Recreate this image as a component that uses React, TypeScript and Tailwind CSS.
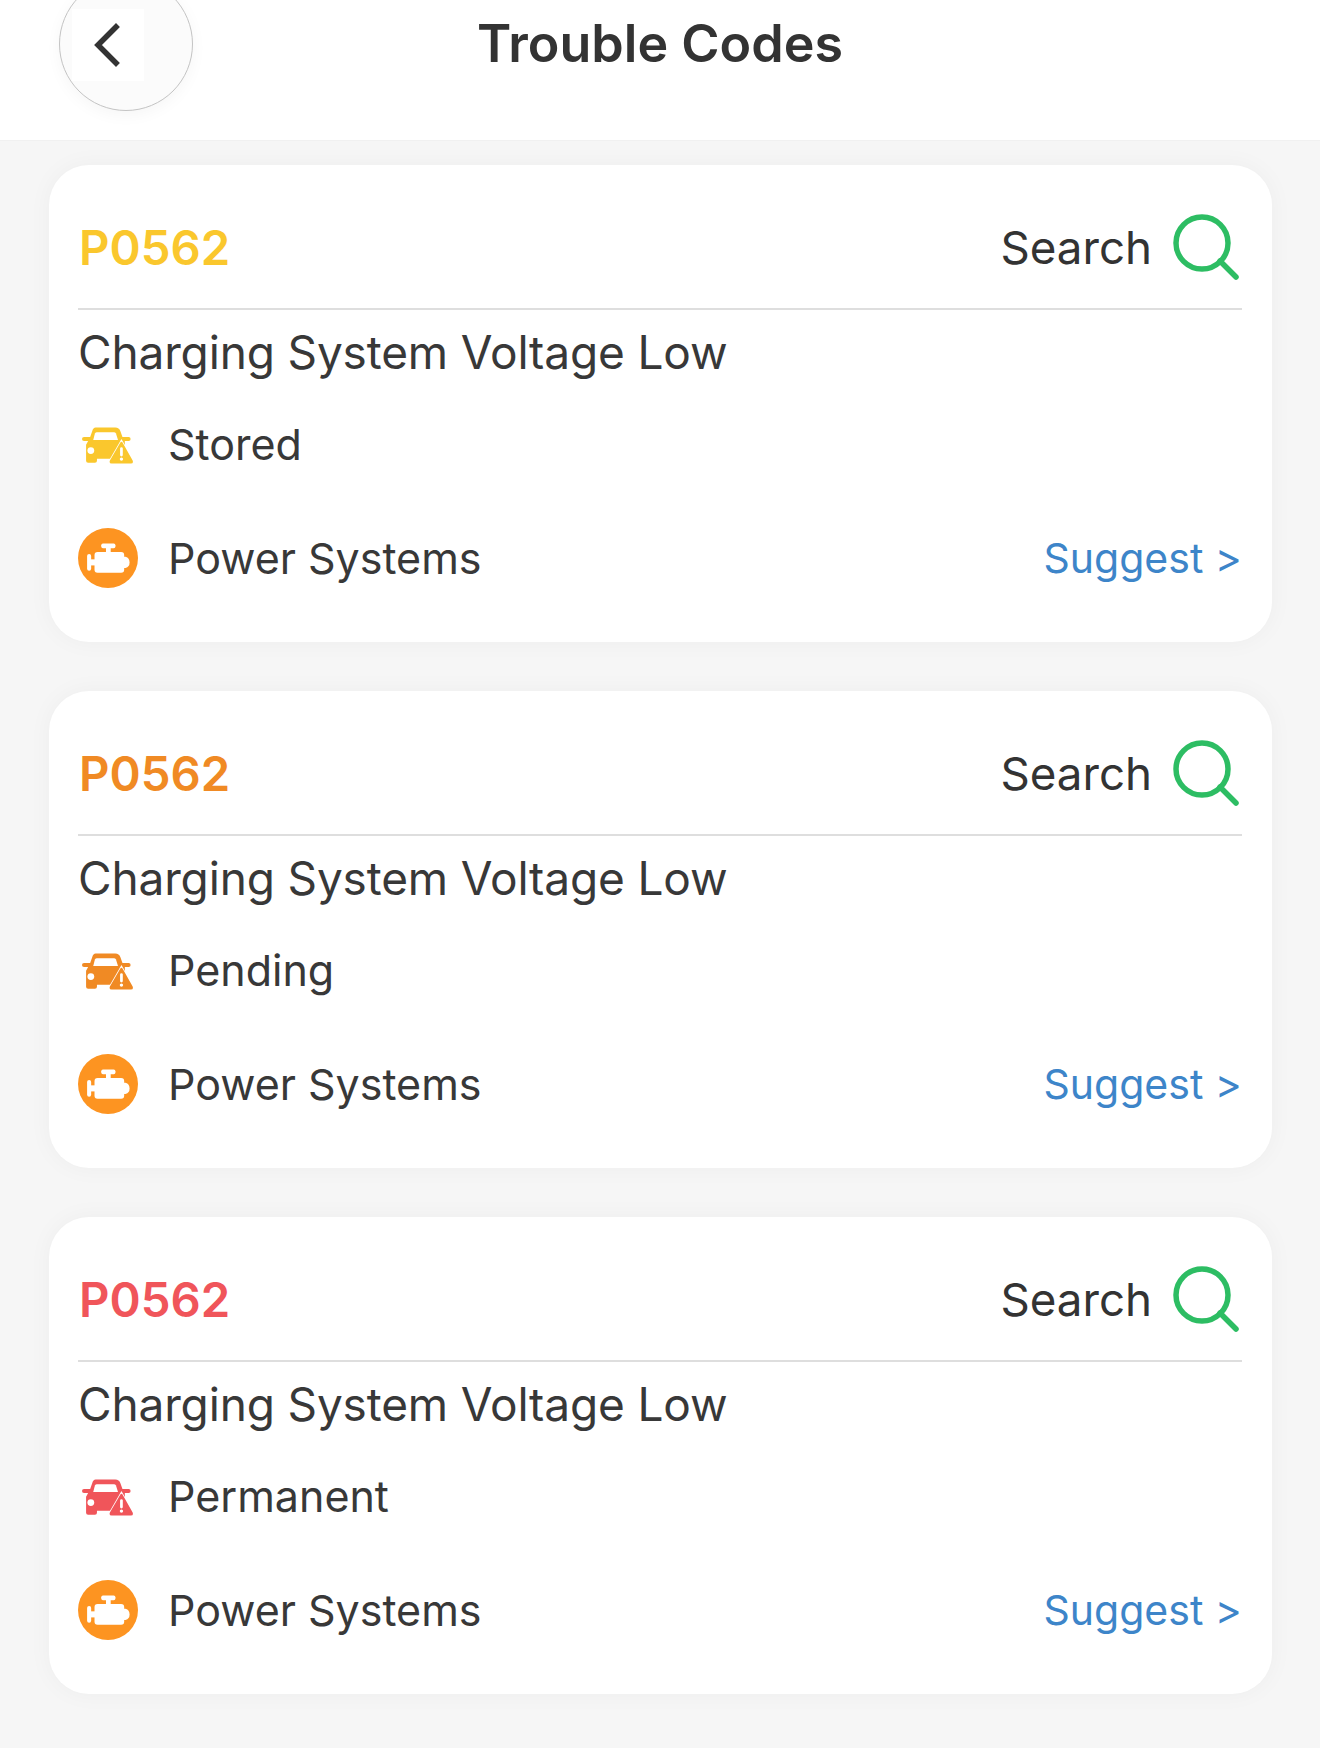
const FONT = "font-['Inter','Liberation_Sans',sans-serif]";

function CarIcon({ color }: { color: string }) {
  return (
    <svg width="51" height="37" viewBox="68 83 150 108" className="mt-[2px]">
      <path
        d="M108 84 H166 Q177 84 181 95 L187 112 H205 Q211 112 211 118 Q211 124 205 124 H194 V176 H112 V182 Q112 188 106 188 H86 Q80 188 80 182 V135 L86 124 H74 Q68 124 68 118 Q68 112 74 112 H92 L98 95 Q101 84 108 84 Z"
        fill={color}
      />
      <path d="M112 98 H162 Q166 98 168 102 L174 121 H101 L106 102 Q108 98 112 98 Z" fill="#ffffff" />
      <circle cx="94" cy="152" r="10" fill="#ffffff" />
      <path d="M184 118 L140 194 H228 Z" fill="#ffffff" />
      <path d="M184 126 Q186 126 188 130 L217 181 Q220 190 212 190 H155 Q147 190 150 181 L180 130 Q182 126 184 126 Z" fill={color} />
      <rect x="180" y="142" width="8" height="27" rx="4" fill="#ffffff" />
      <circle cx="184" cy="177" r="5" fill="#ffffff" />
    </svg>
  );
}

function EngineIcon() {
  return (
    <svg width="60" height="60" viewBox="55 385 178 178">
      <circle cx="144" cy="474" r="89" fill="#fd9421" />
      <g fill="#ffffff">
        <rect x="124" y="431" width="42" height="14" rx="5" />
        <rect x="138" y="444" width="14" height="14" />
        <rect x="104" y="456" width="88" height="62" rx="9" />
        <rect x="82" y="462" width="12" height="50" rx="6" />
        <rect x="90" y="478" width="16" height="18" />
        <path d="M190 470 H196 Q208 474 208 487 Q208 500 196 504 H190 Z" />
      </g>
    </svg>
  );
}

function SearchIcon() {
  return (
    <svg width="66" height="66" viewBox="0 0 66 66" fill="none" stroke="#2dbd63" strokeWidth="5.5" strokeLinecap="round" className="mt-[-2px]">
      <circle cx="29" cy="29" r="26" />
      <path d="M47 47 L63 63" />
    </svg>
  );
}

function Card({ color, status }: { color: string; status: string }) {
  return (
    <div className="bg-white rounded-[40px] pl-[29px] pr-[30px] h-[477px] shadow-[0_0_24px_rgba(0,0,0,0.04)]">
      <div className="h-[145px] pt-[22px] flex items-center justify-between border-b-2 border-[#dedede]">
        <span className="text-[47.3px] font-semibold leading-none pl-px" style={{ color }}>
          P0562
        </span>
        <div className="flex items-center gap-[21px] pr-[3px]">
          <span className="text-[45.7px] leading-none text-[#333333]">Search</span>
          <SearchIcon />
        </div>
      </div>
      <div className="h-[84px] flex items-center text-[46px] tracking-[-0.15px] leading-none text-[#383838]">
        Charging System Voltage Low
      </div>
      <div className="h-[100px] flex items-center">
        <div className="w-[90px] pl-[4px] flex items-center">
          <CarIcon color={color} />
        </div>
        <span className="text-[43px] leading-none text-[#383838]">{status}</span>
      </div>
      <div className="h-[148px] pb-[20px] flex items-center justify-between">
        <div className="flex items-center">
          <div className="w-[90px] flex items-center">
            <EngineIcon />
          </div>
          <span className="text-[43px] leading-none text-[#383838]">Power Systems</span>
        </div>
        <span className="text-[41px] leading-none text-[#3d85c9]">Suggest &gt;</span>
      </div>
    </div>
  );
}

export default function App() {
  return (
    <div className={`${FONT} w-[1320px] h-[1748px] bg-[#f6f6f6] overflow-hidden`}>
      <header className="relative h-[140px] bg-white flex items-center justify-center pb-[52px] shadow-[0_1px_1px_rgba(0,0,0,0.02)]">
        <div className="absolute left-[59px] top-[-23px] w-[134px] h-[134px] rounded-full border border-[#c4c4c4] bg-[#fbfbfb] shadow-[0_4px_16px_rgba(0,0,0,0.04)]">
          <div className="absolute left-[12px] top-[31px] w-[72px] h-[72px] bg-white flex items-center justify-center pr-[5px]">
            <svg width="30" height="44" viewBox="0 0 30 44" fill="none" stroke="#333333" strokeWidth="5.5" strokeLinecap="square">
              <path d="M25 4 L7 22 L25 40" />
            </svg>
          </div>
        </div>
        <h1 className="text-[52px] font-semibold leading-none text-[#333333]">Trouble Codes</h1>
      </header>
      <main className="pl-[49px] pr-[48px] pt-[25px] flex flex-col gap-[49px]">
        <Card color="#fac72d" status="Stored" />
        <Card color="#f08a24" status="Pending" />
        <Card color="#f0555a" status="Permanent" />
      </main>
    </div>
  );
}
